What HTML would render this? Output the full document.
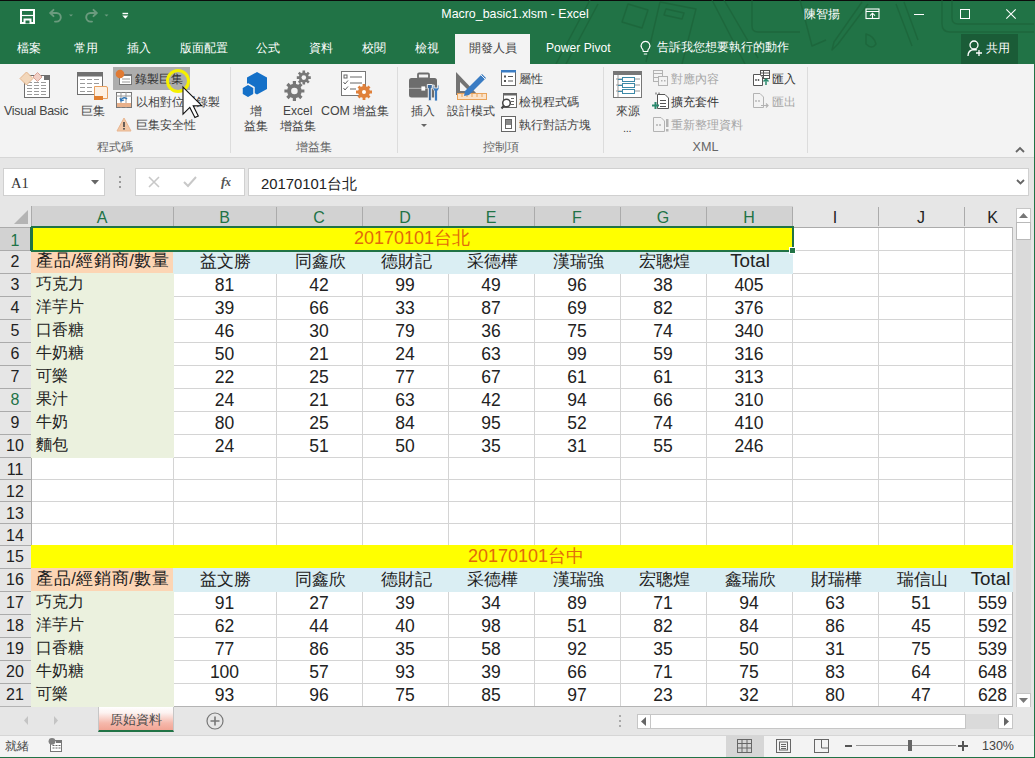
<!DOCTYPE html><html><head><meta charset="utf-8"><style>
html,body{margin:0;padding:0;}
body{width:1035px;height:758px;position:relative;overflow:hidden;background:#e6e6e6;font-family:"Liberation Sans",sans-serif;}
div{box-sizing:border-box;}
.t{position:absolute;white-space:nowrap;}
.c{text-align:center;}
svg{position:absolute;overflow:visible;}
</style></head><body>
<div style="position:absolute;left:0px;top:0px;width:1035px;height:64px;background:#217346;"></div>
<div style="position:absolute;left:0px;top:0px;width:1035px;height:1px;background:#0b0b0b;"></div>
<svg style="left:0;top:0" width="1035" height="64" viewBox="0 0 1035 64"><g fill="none" stroke="#1c6339" stroke-width="1.4" opacity="0.7" stroke-linejoin="round">
<path d="M556 64 L590 0"/><path d="M566 64 L598 4"/>
<path d="M628 4 L648 10 L642 28 L622 22Z"/>
<path d="M660 2 L696 9 L682 64 M660 2 L646 62"/><path d="M666 9 L684 13 L682 19 L664 15Z"/>
<path d="M712 0 L745 64"/><path d="M724 0 L758 58"/>
<path d="M752 0 V26 Q752 32 758 32 H800"/>
<path d="M800 0 L812 46 L826 40"/>
<path d="M868 4 L838 44 L832 50 L834 42 L862 2"/><path d="M866 34 Q874 36 876 44 Q872 50 866 44Z"/>
<path d="M896 4 L912 46 M904 2 L918 40"/>
<path d="M942 0 V24 Q942 32 950 32 H1034"/><path d="M952 0 V18 Q952 24 958 24 H1034"/>
</g></svg>
<svg style="left:19px;top:8px" width="17" height="17" viewBox="0 0 17 17"><rect x="2" y="2" width="13" height="13" fill="none" stroke="#fff" stroke-width="2"/><path d="M3 7.5 H14" stroke="#fff" stroke-width="1.2"/><rect x="4.5" y="10.5" width="8" height="5" fill="#fff"/><rect x="6.5" y="12.5" width="4" height="3" fill="#217346"/></svg>
<svg style="left:40px;top:2px" width="95" height="28" viewBox="40 2 95 28"><g fill="none" stroke="#6b9b7e" stroke-width="1.9" stroke-linecap="round" stroke-linejoin="round">
<path d="M50.5 13 H56.5 A4.3 4.3 0 0 1 56.5 21.6 H55"/><path d="M53.5 9.8 L50.3 13 L53.5 16.2"/>
<path d="M96.5 13 H90.5 A4.3 4.3 0 0 0 90.5 21.6 H92"/><path d="M93.5 9.8 L96.7 13 L93.5 16.2"/></g>
<g fill="#6b9b7e"><path d="M69 14.5h4l-2 2z"/><path d="M104.5 14.5h4l-2 2z"/></g>
<g fill="#fff"><rect x="122.5" y="12.8" width="5.6" height="1.4"/><path d="M122.3 15.5h6l-3 3.3z"/></g></svg>
<div class="t" style="left:375px;top:4px;width:280px;height:20px;line-height:20px;font-size:12.4px;color:#fff;text-align:center;">Macro_basic1.xlsm - Excel</div>
<div class="t" style="left:804px;top:4px;width:40px;height:20px;line-height:20px;font-size:12px;color:#fff;">陳智揚</div>
<svg style="left:865px;top:8px" width="15" height="11" viewBox="0 0 15 11"><rect x="1" y="1" width="13" height="9.5" fill="none" stroke="#fff" stroke-width="1.1"/><path d="M1 3.5H14" stroke="#fff" stroke-width="1"/><path d="M7.5 10.5V5.2M5 7.6L7.5 5.2L10 7.6" fill="none" stroke="#fff" stroke-width="1.1"/></svg>
<div style="position:absolute;left:914px;top:14px;width:10px;height:1px;background:#fff;"></div>
<div style="position:absolute;left:960px;top:9px;width:10px;height:10px;border:1px solid #fff;"></div>
<svg style="left:1006px;top:9px" width="10" height="10" viewBox="0 0 10 10"><path d="M0.3 0.3L9.7 9.7M9.7 0.3L0.3 9.7" stroke="#fff" stroke-width="1.1"/></svg>
<div class="t" style="left:17px;top:39px;width:60px;height:18px;line-height:18px;font-size:11.6px;color:#fff;">檔案</div>
<div class="t" style="left:74px;top:39px;width:60px;height:18px;line-height:18px;font-size:11.6px;color:#fff;">常用</div>
<div class="t" style="left:127px;top:39px;width:60px;height:18px;line-height:18px;font-size:11.6px;color:#fff;">插入</div>
<div class="t" style="left:180px;top:39px;width:60px;height:18px;line-height:18px;font-size:11.6px;color:#fff;">版面配置</div>
<div class="t" style="left:256px;top:39px;width:60px;height:18px;line-height:18px;font-size:11.6px;color:#fff;">公式</div>
<div class="t" style="left:309px;top:39px;width:60px;height:18px;line-height:18px;font-size:11.6px;color:#fff;">資料</div>
<div class="t" style="left:362px;top:39px;width:60px;height:18px;line-height:18px;font-size:11.6px;color:#fff;">校閱</div>
<div class="t" style="left:415px;top:39px;width:60px;height:18px;line-height:18px;font-size:11.6px;color:#fff;">檢視</div>
<div style="position:absolute;left:455px;top:34px;width:75px;height:30px;background:#f3f3f3;"></div>
<div class="t" style="left:469px;top:39px;width:60px;height:18px;line-height:18px;font-size:11.6px;color:#444;">開發人員</div>
<div class="t" style="left:546px;top:39px;width:80px;height:18px;line-height:18px;font-size:12.1px;color:#fff;">Power Pivot</div>
<svg style="left:640px;top:41px" width="11" height="15" viewBox="0 0 11 15"><path d="M3.3 10.5 Q3.3 8.5 1.6 6.8 A4.4 4.4 0 1 1 9.4 6.8 Q7.7 8.5 7.7 10.5Z M3.8 13H7.2" fill="none" stroke="#fff" stroke-width="1.2"/></svg>
<div class="t" style="left:657px;top:38px;width:140px;height:18px;line-height:18px;font-size:12.4px;color:#fff;">告訴我您想要執行的動作</div>
<div style="position:absolute;left:961px;top:34px;width:57px;height:30px;background:#1a5c37;"></div>
<svg style="left:967px;top:40px" width="16" height="17" viewBox="0 0 16 17"><circle cx="7" cy="5" r="4" fill="none" stroke="#fff" stroke-width="1.3"/><path d="M1 16 Q1 10 7 9.5 Q9 9.5 10 10" fill="none" stroke="#fff" stroke-width="1.3"/><path d="M12 10V16M9 13H15" stroke="#fff" stroke-width="1.3"/></svg>
<div class="t" style="left:986px;top:39px;width:30px;height:18px;line-height:18px;font-size:11.6px;color:#fff;">共用</div>
<div style="position:absolute;left:0px;top:64px;width:1035px;height:94px;background:#f3f3f3;border-bottom:1px solid #d6d6d6;"></div>
<div style="position:absolute;left:230px;top:67px;width:1px;height:86px;background:#dcdcdc;"></div>
<div style="position:absolute;left:397px;top:67px;width:1px;height:86px;background:#dcdcdc;"></div>
<div style="position:absolute;left:603px;top:67px;width:1px;height:86px;background:#dcdcdc;"></div>
<div style="position:absolute;left:807px;top:67px;width:1px;height:86px;background:#dcdcdc;"></div>
<svg style="left:14px;top:66px" width="40" height="36" viewBox="0 0 40 36">
<rect x="10.5" y="9.5" width="25" height="22" fill="#fff" stroke="#6f6f6f"/><rect x="30" y="9" width="6" height="5" fill="#6f6f6f"/>
<g stroke="#9a9a9a" stroke-width="1" stroke-dasharray="5 2"><path d="M13 16.5h20M13 19.5h20M13 22.5h20M13 25.5h20M13 28.5h20"/></g>
<path d="M12.5 6 L19 12.5 L12.5 19 L6 12.5Z" fill="#f2d7bb" stroke="#e3b58c"/><path d="M23.5 6.5 L28 11 L23.5 15.5 L19 11Z" fill="#f1cfc5" stroke="#d9a497"/></svg>
<div class="t" style="left:4px;top:102px;width:70px;height:18px;line-height:18px;color:#444;font-size:11.6px;font-size:12.4px;letter-spacing:-0.25px;">Visual Basic</div>
<svg style="left:76px;top:71px" width="34" height="30" viewBox="0 0 34 30">
<rect x="1.5" y="1.5" width="25" height="22" fill="#fff" stroke="#6f6f6f"/><rect x="1" y="1" width="26" height="4.5" fill="#6f6f6f"/>
<g stroke="#9a9a9a" stroke-dasharray="5 2"><path d="M4 8.5h20M4 12.5h20M4 16.5h20M4 20.5h16"/></g>
<path d="M18.5 15.5 H30 Q31.5 15.5 31.5 17 V27.5 H18.5Z" fill="#fdf1e4" stroke="#e8a060"/><rect x="18" y="25" width="9" height="4" fill="#e07f2f"/></svg>
<div class="t" style="left:81px;top:102px;width:30px;height:18px;line-height:18px;color:#444;font-size:11.6px;">巨集</div>
<div style="position:absolute;left:113px;top:67px;width:77px;height:23px;background:#adadad;"></div>
<svg style="left:115px;top:69px" width="18" height="18" viewBox="0 0 18 18">
<rect x="4.5" y="5.5" width="12" height="10" fill="#fff" stroke="#777"/><rect x="4" y="5" width="13" height="2" fill="#777"/>
<g stroke="#999"><path d="M7 10h8M7 13h8"/></g><circle cx="5" cy="5" r="4.3" fill="#e07a33"/></svg>
<div class="t" style="left:135px;top:70px;width:60px;height:18px;line-height:18px;color:#444;font-size:11.6px;color:#333;">錄製巨集</div>
<svg style="left:116px;top:92px" width="17" height="17" viewBox="0 0 17 17">
<rect x="0.5" y="0.5" width="15" height="15" fill="#fff" stroke="#777"/><path d="M0 4h16M5 0v16M10 0v16" stroke="#999"/>
<rect x="1" y="11" width="14" height="4" fill="#e8b08a"/><path d="M5 8 Q8 4 11 7" fill="none" stroke="#2e75b6" stroke-width="1.5"/><path d="M4 6 L5 9 L8 8" fill="none" stroke="#2e75b6" stroke-width="1.3"/></svg>
<div class="t" style="left:136px;top:93px;width:90px;height:18px;line-height:18px;color:#444;font-size:11.6px;">以相對位置錄製</div>
<svg style="left:116px;top:117px" width="16" height="15" viewBox="0 0 16 15">
<path d="M8 1 L15 14 H1Z" fill="#f2c7a6" stroke="#e9b690"/><rect x="7.2" y="5" width="1.6" height="5" fill="#444"/><rect x="7.2" y="11" width="1.6" height="1.6" fill="#444"/></svg>
<div class="t" style="left:136px;top:116px;width:70px;height:18px;line-height:18px;color:#444;font-size:11.6px;">巨集安全性</div>
<div class="t" style="left:80px;top:138px;width:70px;height:18px;line-height:18px;color:#666;font-size:12.4px;text-align:center;">程式碼</div>
<svg style="left:160px;top:64px" width="50" height="60" viewBox="0 0 50 60">
<circle cx="18" cy="17" r="10.5" fill="none" stroke="#f5f000" stroke-width="3"/>
<path d="M23.0 23.0 L23.0 50.2 L29.8 43.4 L34.9 53.6 L38.3 51.9 L33.2 41.7 L41.7 41.7Z" fill="#fff" stroke="#111" stroke-width="1.1" stroke-linejoin="miter"/></svg>
<svg style="left:240px;top:71px" width="30" height="30" viewBox="0 0 30 30">
<path d="M17 1 L27 6.5 V18 L17 23.5 L7 18 V6.5Z" fill="#1470c8"/>
<path d="M8 13 L14 16.5 V23.5 L8 27 L2 23.5 V16.5Z" fill="#1470c8" stroke="#f3f3f3" stroke-width="1.5"/></svg>
<div class="t" style="left:250px;top:102px;width:30px;height:18px;line-height:18px;color:#444;font-size:11.6px;">增</div>
<div class="t" style="left:244px;top:117px;width:30px;height:18px;line-height:18px;color:#444;font-size:11.6px;">益集</div>
<svg style="left:283px;top:69px" width="32" height="34" viewBox="0 0 32 34">
<g transform="translate(11.4 22)"><circle r="7.3" fill="#777"/><g stroke="#777" stroke-width="3.2"><path d="M0 -10V10M-10 0H10M-7 -7L7 7M7 -7L-7 7"/></g><circle r="3.3" fill="#f3f3f3"/></g>
<g transform="translate(20.8 8.6)"><circle r="5" fill="#777"/><g stroke="#777" stroke-width="2.6"><path d="M0 -7V7M-7 0H7M-5 -5L5 5M5 -5L-5 5"/></g><circle r="2.3" fill="#f3f3f3"/></g></svg>
<div class="t" style="left:283px;top:102px;width:40px;height:18px;line-height:18px;color:#444;font-size:11.6px;font-size:12px;">Excel</div>
<div class="t" style="left:280px;top:117px;width:40px;height:18px;line-height:18px;color:#444;font-size:11.6px;">增益集</div>
<svg style="left:340px;top:70px" width="34" height="32" viewBox="0 0 34 32">
<rect x="1.5" y="1.5" width="24" height="24" fill="#fff" stroke="#777"/>
<g stroke="#666"><path d="M10 7h12M10 13h12M10 19h6"/></g><rect x="4" y="5" width="3" height="3" fill="none" stroke="#666"/>
<path d="M3.5 12 L5 14 L8 10.5M3.5 18 L5 20 L8 16.5" fill="none" stroke="#666"/>
<g fill="#e0803a"><circle cx="24" cy="22" r="6"/></g><g stroke="#e0803a" stroke-width="2.8"><path d="M24 14v16M16 22h16M18.5 16.5l11 11M29.5 16.5l-11 11"/></g><circle cx="24" cy="22" r="2" fill="#fff"/></svg>
<div class="t" style="left:321px;top:102px;width:75px;height:18px;line-height:18px;color:#444;font-size:11.6px;font-size:12.4px;">COM 增益集</div>
<div class="t" style="left:231px;top:138px;width:166px;height:18px;line-height:18px;color:#666;font-size:12.4px;text-align:center;">增益集</div>
<svg style="left:407px;top:71px" width="34" height="32" viewBox="0 0 34 32">
<rect x="11" y="2.5" width="11" height="5" rx="1" fill="none" stroke="#6d6d6d" stroke-width="1.8"/>
<rect x="2" y="7" width="28" height="19.5" rx="2.5" fill="#6d6d6d"/><rect x="2" y="16.8" width="28" height="1.2" fill="#a8a8a8"/><rect x="14.4" y="15.4" width="3.8" height="4.2" fill="#fff"/>
<path d="M20.3 13.5 h5 v3 l-1 0.8 v12.5 h-3 v-12.5 l-1 -0.8z" fill="#3c6a9c" stroke="#f3f3f3" stroke-width="1"/>
<path d="M26 14 v3.5 a2.8 2.8 0 0 0 1.5 2.3 v10.2 h3 v-10.2 a2.8 2.8 0 0 0 1.5 -2.3 v-3.5 l-1.3 0 v3 h-3.4 v-3z" fill="#3c7cc0" stroke="#f3f3f3" stroke-width="0.8"/></svg>
<div class="t" style="left:411px;top:102px;width:30px;height:18px;line-height:18px;color:#444;font-size:11.6px;">插入</div>
<svg style="left:421px;top:124px" width="6" height="4" viewBox="0 0 6 4"><path d="M0 0h6L3 3z" fill="#666"/></svg>
<svg style="left:454px;top:70px" width="34" height="32" viewBox="0 0 34 32">
<path d="M2 2 L2 25 L24 25Z" fill="#737373"/><path d="M6 12 L6 21 L15 21Z" fill="#f3f3f3"/>
<rect x="3.5" y="23.5" width="29" height="6" fill="#fbe3c9" stroke="#e9a35a"/><g stroke="#e9a35a"><path d="M8 24v3M13 24v3M18 24v3M23 24v3M28 24v3"/></g>
<path d="M11 21 L28 4 L32 8 L15 25 L10 26Z" fill="#3a7cc3"/><path d="M27 5 L31 9" stroke="#f3f3f3"/></svg>
<div class="t" style="left:447px;top:102px;width:50px;height:18px;line-height:18px;color:#444;font-size:11.6px;">設計模式</div>
<svg style="left:501px;top:70px" width="15" height="16" viewBox="0 0 15 16"><rect x="0.5" y="0.5" width="14" height="15" fill="#fff" stroke="#666"/><rect x="0" y="0" width="15" height="2.5" fill="#3a7cc3"/><g fill="#555"><rect x="3" y="5.5" width="2" height="2"/><rect x="3" y="10" width="2" height="2"/><rect x="7" y="6" width="5" height="1"/><rect x="7" y="10.5" width="5" height="1"/></g></svg>
<div class="t" style="left:519px;top:70px;width:40px;height:18px;line-height:18px;color:#444;font-size:11.6px;">屬性</div>
<svg style="left:501px;top:93px" width="16" height="17" viewBox="0 0 16 17"><rect x="2.5" y="0.5" width="13" height="14" fill="#fff" stroke="#666"/><rect x="2" y="0" width="14" height="2.5" fill="#666"/><g fill="#666"><rect x="10" y="5" width="3" height="1"/><rect x="10" y="8" width="3" height="1"/><rect x="10" y="11" width="3" height="1"/></g><circle cx="5.5" cy="10" r="3.8" fill="#fff" stroke="#444" stroke-width="1.5"/><path d="M3 12.5 L0.5 15.5" stroke="#444" stroke-width="2"/></svg>
<div class="t" style="left:519px;top:93px;width:70px;height:18px;line-height:18px;color:#444;font-size:11.6px;">檢視程式碼</div>
<svg style="left:501px;top:116px" width="15" height="16" viewBox="0 0 15 16"><rect x="0.5" y="0.5" width="14" height="15" fill="#fff" stroke="#666"/><rect x="4.5" y="3.5" width="6" height="9" fill="#fff" stroke="#666"/><rect x="5" y="4" width="5" height="5" fill="#888"/></svg>
<div class="t" style="left:519px;top:116px;width:80px;height:18px;line-height:18px;color:#444;font-size:11.6px;">執行對話方塊</div>
<div class="t" style="left:398px;top:138px;width:205px;height:18px;line-height:18px;color:#666;font-size:12.4px;text-align:center;">控制項</div>
<svg style="left:613px;top:71px" width="30" height="30" viewBox="0 0 30 30">
<rect x="0.5" y="0.5" width="28" height="26" fill="#fff" stroke="#777"/><rect x="0" y="0" width="29" height="4" fill="#777"/>
<g stroke="#999"><path d="M3 8h24M3 14h24M3 20h24M5 4v22"/></g>
<g fill="#fff" stroke="#3d8aa8"><rect x="9.5" y="6.5" width="12" height="4"/><rect x="9.5" y="12.5" width="12" height="4"/><rect x="9.5" y="18.5" width="12" height="4"/></g>
<path d="M5 8.5h4.5M5 14.5h4.5M5 20.5h4.5" stroke="#3d8aa8"/></svg>
<div class="t" style="left:616px;top:102px;width:30px;height:18px;line-height:18px;color:#444;font-size:11.6px;">來源</div>
<div class="t" style="left:623px;top:119px;width:30px;height:18px;line-height:18px;color:#444;font-size:11.6px;font-size:11px;letter-spacing:-0.3px;">...</div>
<svg style="left:653px;top:70px" width="16" height="16" viewBox="0 0 16 16"><g fill="none" stroke="#b3b3b3"><rect x="0.5" y="0.5" width="9" height="11"/><path d="M0.5 3.5h9M0.5 7.5h9"/><rect x="5.5" y="6.5" width="9" height="9" fill="#f3f3f3"/></g><g fill="#b3b3b3"><rect x="8" y="10" width="1.5" height="1.5"/><rect x="11" y="10" width="1.5" height="1.5"/></g></svg>
<div class="t" style="left:671px;top:70px;width:60px;height:18px;line-height:18px;color:#a6a6a6;font-size:11.6px;">對應內容</div>
<svg style="left:652px;top:92px" width="18" height="18" viewBox="0 0 18 18"><path d="M5.5 2.5 H13 L16.5 6 V16.5 H5.5Z" fill="#fff" stroke="#555"/><g fill="#555"><rect x="8" y="8" width="6" height="1"/><rect x="8" y="11" width="6" height="1"/><rect x="8" y="14" width="6" height="1"/></g><path d="M4 0.5 v2M7 0.5 v2" stroke="#555"/><path d="M3.5 10v7M0 13.5h7" stroke="#2a8a6e" stroke-width="2"/></svg>
<div class="t" style="left:671px;top:93px;width:60px;height:18px;line-height:18px;color:#444;font-size:11.6px;color:#333;">擴充套件</div>
<svg style="left:653px;top:116px" width="17" height="17" viewBox="0 0 17 17"><path d="M0.5 1.5 H8 L11.5 5 V15.5 H0.5Z" fill="none" stroke="#b3b3b3"/><g fill="#b3b3b3"><circle cx="4" cy="9" r="1"/><circle cx="7" cy="9" r="1"/><rect x="13" y="3" width="2.5" height="8"/><rect x="13" y="13" width="2.5" height="2.5"/></g></svg>
<div class="t" style="left:671px;top:116px;width:80px;height:18px;line-height:18px;color:#a6a6a6;font-size:11.6px;">重新整理資料</div>
<svg style="left:753px;top:70px" width="17" height="16" viewBox="0 0 17 16"><rect x="7.5" y="0.5" width="9" height="8" fill="#fff" stroke="#555"/><path d="M7.5 3h9M7.5 5.5h9M10.5 0.5v8" stroke="#555"/><path d="M0.5 4.5 H7 L9.5 7 V15.5 H0.5Z" fill="#fff" stroke="#555"/><g fill="#555"><circle cx="3" cy="10" r="0.9"/><circle cx="5.5" cy="10" r="0.9"/></g><path d="M13 15V9M10.5 11.5L13 9L15.5 11.5" fill="none" stroke="#2a8a6e" stroke-width="1.5"/></svg>
<div class="t" style="left:772px;top:70px;width:30px;height:18px;line-height:18px;color:#444;font-size:11.6px;color:#333;">匯入</div>
<svg style="left:753px;top:93px" width="17" height="16" viewBox="0 0 17 16"><path d="M0.5 0.5 H7 L10.5 4 V14.5 H0.5Z" fill="none" stroke="#b3b3b3"/><g fill="#b3b3b3"><circle cx="3" cy="8" r="0.9"/><circle cx="6" cy="8" r="0.9"/></g><path d="M8 12.5H15M13 10.5L15 12.5L13 14.5" fill="none" stroke="#b3b3b3" stroke-width="1.2"/></svg>
<div class="t" style="left:772px;top:93px;width:30px;height:18px;line-height:18px;color:#a6a6a6;font-size:11.6px;">匯出</div>
<div class="t" style="left:604px;top:138px;width:203px;height:18px;line-height:18px;color:#666;font-size:12.4px;text-align:center;font-size:12.6px;">XML</div>
<svg style="left:1015px;top:146px" width="10" height="7" viewBox="0 0 10 7"><path d="M1 6 L5 2 L9 6" fill="none" stroke="#666" stroke-width="1.8"/></svg>
<div style="position:absolute;left:3px;top:168px;width:102px;height:28px;background:#fff;border:1px solid #d0d0d0;"></div>
<div class="t" style="left:11px;top:174px;width:40px;height:18px;line-height:18px;font-family:&quot;Liberation Serif&quot;,serif;font-size:14.5px;color:#333;">A1</div>
<svg style="left:91px;top:180px" width="8" height="5" viewBox="0 0 8 5"><path d="M0 0h8L4 4.5z" fill="#666"/></svg>
<div style="position:absolute;left:119px;top:176px;width:2px;height:2px;background:#9a9a9a;"></div>
<div style="position:absolute;left:119px;top:181px;width:2px;height:2px;background:#9a9a9a;"></div>
<div style="position:absolute;left:119px;top:186px;width:2px;height:2px;background:#9a9a9a;"></div>
<div style="position:absolute;left:135px;top:168px;width:110px;height:28px;background:#fff;border:1px solid #d0d0d0;"></div>
<svg style="left:148px;top:176px" width="12" height="12" viewBox="0 0 12 12"><path d="M1 1L11 11M11 1L1 11" stroke="#c8c8c8" stroke-width="1.6"/></svg>
<svg style="left:183px;top:176px" width="14" height="12" viewBox="0 0 14 12"><path d="M1 6L5 10L13 1" fill="none" stroke="#c8c8c8" stroke-width="2"/></svg>
<div class="t" style="left:221px;top:173px;width:20px;height:18px;line-height:18px;font-family:&quot;Liberation Serif&quot;,serif;font-size:13.5px;color:#555;font-weight:bold;letter-spacing:-0.5px;"><i>f</i><span style="font-size:12px"><i>x</i></span></div>
<div style="position:absolute;left:248px;top:168px;width:781px;height:28px;background:#fff;border:1px solid #d0d0d0;"></div>
<div class="t" style="left:261px;top:175px;width:200px;height:18px;line-height:18px;font-size:14.85px;color:#222;">20170101台北</div>
<svg style="left:1016px;top:179px" width="9" height="6" viewBox="0 0 9 6"><path d="M1 1L4.5 4.5L8 1" fill="none" stroke="#666" stroke-width="1.8"/></svg>
<div style="position:absolute;left:0px;top:206px;width:1013px;height:21px;background:#e6e6e6;"></div>
<div style="position:absolute;left:31px;top:206px;width:762px;height:20px;background:#d2d2d2;"></div>
<svg style="left:14px;top:210px" width="14" height="14" viewBox="0 0 14 14"><path d="M14 0V14H0Z" fill="#b4b4b4"/></svg>
<div style="position:absolute;left:0px;top:227px;width:31px;height:480px;background:#e6e6e6;"></div>
<div style="position:absolute;left:0px;top:227px;width:31px;height:23px;background:#d2d2d2;"></div>
<div style="position:absolute;left:32px;top:227px;width:981px;height:480px;background:#fff;"></div>
<div style="position:absolute;left:32px;top:250px;width:981px;height:1px;background:#d4d4d4;"></div>
<div style="position:absolute;left:0px;top:250px;width:31px;height:1px;background:#ababab;"></div>
<div style="position:absolute;left:32px;top:273px;width:981px;height:1px;background:#d4d4d4;"></div>
<div style="position:absolute;left:0px;top:273px;width:31px;height:1px;background:#ababab;"></div>
<div style="position:absolute;left:32px;top:296px;width:981px;height:1px;background:#d4d4d4;"></div>
<div style="position:absolute;left:0px;top:296px;width:31px;height:1px;background:#ababab;"></div>
<div style="position:absolute;left:32px;top:319px;width:981px;height:1px;background:#d4d4d4;"></div>
<div style="position:absolute;left:0px;top:319px;width:31px;height:1px;background:#ababab;"></div>
<div style="position:absolute;left:32px;top:342px;width:981px;height:1px;background:#d4d4d4;"></div>
<div style="position:absolute;left:0px;top:342px;width:31px;height:1px;background:#ababab;"></div>
<div style="position:absolute;left:32px;top:365px;width:981px;height:1px;background:#d4d4d4;"></div>
<div style="position:absolute;left:0px;top:365px;width:31px;height:1px;background:#ababab;"></div>
<div style="position:absolute;left:32px;top:388px;width:981px;height:1px;background:#d4d4d4;"></div>
<div style="position:absolute;left:0px;top:388px;width:31px;height:1px;background:#ababab;"></div>
<div style="position:absolute;left:32px;top:411px;width:981px;height:1px;background:#d4d4d4;"></div>
<div style="position:absolute;left:0px;top:411px;width:31px;height:1px;background:#ababab;"></div>
<div style="position:absolute;left:32px;top:434px;width:981px;height:1px;background:#d4d4d4;"></div>
<div style="position:absolute;left:0px;top:434px;width:31px;height:1px;background:#ababab;"></div>
<div style="position:absolute;left:32px;top:457px;width:981px;height:1px;background:#d4d4d4;"></div>
<div style="position:absolute;left:0px;top:457px;width:31px;height:1px;background:#ababab;"></div>
<div style="position:absolute;left:32px;top:479px;width:981px;height:1px;background:#d4d4d4;"></div>
<div style="position:absolute;left:0px;top:479px;width:31px;height:1px;background:#ababab;"></div>
<div style="position:absolute;left:32px;top:501px;width:981px;height:1px;background:#d4d4d4;"></div>
<div style="position:absolute;left:0px;top:501px;width:31px;height:1px;background:#ababab;"></div>
<div style="position:absolute;left:32px;top:523px;width:981px;height:1px;background:#d4d4d4;"></div>
<div style="position:absolute;left:0px;top:523px;width:31px;height:1px;background:#ababab;"></div>
<div style="position:absolute;left:32px;top:545px;width:981px;height:1px;background:#d4d4d4;"></div>
<div style="position:absolute;left:0px;top:545px;width:31px;height:1px;background:#ababab;"></div>
<div style="position:absolute;left:32px;top:568px;width:981px;height:1px;background:#d4d4d4;"></div>
<div style="position:absolute;left:0px;top:568px;width:31px;height:1px;background:#ababab;"></div>
<div style="position:absolute;left:32px;top:591px;width:981px;height:1px;background:#d4d4d4;"></div>
<div style="position:absolute;left:0px;top:591px;width:31px;height:1px;background:#ababab;"></div>
<div style="position:absolute;left:32px;top:614px;width:981px;height:1px;background:#d4d4d4;"></div>
<div style="position:absolute;left:0px;top:614px;width:31px;height:1px;background:#ababab;"></div>
<div style="position:absolute;left:32px;top:637px;width:981px;height:1px;background:#d4d4d4;"></div>
<div style="position:absolute;left:0px;top:637px;width:31px;height:1px;background:#ababab;"></div>
<div style="position:absolute;left:32px;top:660px;width:981px;height:1px;background:#d4d4d4;"></div>
<div style="position:absolute;left:0px;top:660px;width:31px;height:1px;background:#ababab;"></div>
<div style="position:absolute;left:32px;top:683px;width:981px;height:1px;background:#d4d4d4;"></div>
<div style="position:absolute;left:0px;top:683px;width:31px;height:1px;background:#ababab;"></div>
<div style="position:absolute;left:32px;top:706px;width:981px;height:1px;background:#d4d4d4;"></div>
<div style="position:absolute;left:0px;top:706px;width:31px;height:1px;background:#ababab;"></div>
<div style="position:absolute;left:173px;top:227px;width:1px;height:479px;background:#d4d4d4;"></div>
<div style="position:absolute;left:173px;top:207px;width:1px;height:19px;background:#ababab;"></div>
<div style="position:absolute;left:276px;top:227px;width:1px;height:479px;background:#d4d4d4;"></div>
<div style="position:absolute;left:276px;top:207px;width:1px;height:19px;background:#ababab;"></div>
<div style="position:absolute;left:362px;top:227px;width:1px;height:479px;background:#d4d4d4;"></div>
<div style="position:absolute;left:362px;top:207px;width:1px;height:19px;background:#ababab;"></div>
<div style="position:absolute;left:448px;top:227px;width:1px;height:479px;background:#d4d4d4;"></div>
<div style="position:absolute;left:448px;top:207px;width:1px;height:19px;background:#ababab;"></div>
<div style="position:absolute;left:534px;top:227px;width:1px;height:479px;background:#d4d4d4;"></div>
<div style="position:absolute;left:534px;top:207px;width:1px;height:19px;background:#ababab;"></div>
<div style="position:absolute;left:620px;top:227px;width:1px;height:479px;background:#d4d4d4;"></div>
<div style="position:absolute;left:620px;top:207px;width:1px;height:19px;background:#ababab;"></div>
<div style="position:absolute;left:706px;top:227px;width:1px;height:479px;background:#d4d4d4;"></div>
<div style="position:absolute;left:706px;top:207px;width:1px;height:19px;background:#ababab;"></div>
<div style="position:absolute;left:792px;top:227px;width:1px;height:479px;background:#d4d4d4;"></div>
<div style="position:absolute;left:792px;top:207px;width:1px;height:19px;background:#ababab;"></div>
<div style="position:absolute;left:878px;top:227px;width:1px;height:479px;background:#d4d4d4;"></div>
<div style="position:absolute;left:878px;top:207px;width:1px;height:19px;background:#ababab;"></div>
<div style="position:absolute;left:964px;top:227px;width:1px;height:479px;background:#d4d4d4;"></div>
<div style="position:absolute;left:964px;top:207px;width:1px;height:19px;background:#ababab;"></div>
<div style="position:absolute;left:0px;top:227px;width:1013px;height:1px;background:#ababab;"></div>
<div style="position:absolute;left:31px;top:226px;width:762px;height:1px;background:#217346;"></div>
<div style="position:absolute;left:31px;top:206px;width:1px;height:500px;background:#ababab;"></div>
<div style="position:absolute;left:30px;top:227px;width:1px;height:24px;background:#217346;"></div>
<div style="position:absolute;left:1012px;top:227px;width:1px;height:480px;background:#b8b8b8;"></div>
<div style="position:absolute;left:0px;top:706px;width:1013px;height:1px;background:#b4b4b4;"></div>
<div style="position:absolute;left:31px;top:226px;width:762px;height:25px;background:#ffff00;"></div>
<div style="position:absolute;left:31px;top:250px;width:143px;height:24px;background:#fcd5b4;"></div>
<div style="position:absolute;left:173px;top:250px;width:620px;height:24px;background:#daeef3;"></div>
<div style="position:absolute;left:31px;top:273px;width:143px;height:24px;background:#ebf1de;"></div>
<div style="position:absolute;left:31px;top:296px;width:143px;height:24px;background:#ebf1de;"></div>
<div style="position:absolute;left:31px;top:319px;width:143px;height:24px;background:#ebf1de;"></div>
<div style="position:absolute;left:31px;top:342px;width:143px;height:24px;background:#ebf1de;"></div>
<div style="position:absolute;left:31px;top:365px;width:143px;height:24px;background:#ebf1de;"></div>
<div style="position:absolute;left:31px;top:388px;width:143px;height:24px;background:#ebf1de;"></div>
<div style="position:absolute;left:31px;top:411px;width:143px;height:24px;background:#ebf1de;"></div>
<div style="position:absolute;left:31px;top:434px;width:143px;height:24px;background:#ebf1de;"></div>
<div style="position:absolute;left:31px;top:545px;width:982px;height:24px;background:#ffff00;"></div>
<div style="position:absolute;left:31px;top:568px;width:143px;height:24px;background:#fcd5b4;"></div>
<div style="position:absolute;left:173px;top:568px;width:840px;height:24px;background:#daeef3;"></div>
<div style="position:absolute;left:31px;top:591px;width:143px;height:24px;background:#ebf1de;"></div>
<div style="position:absolute;left:31px;top:614px;width:143px;height:24px;background:#ebf1de;"></div>
<div style="position:absolute;left:31px;top:637px;width:143px;height:24px;background:#ebf1de;"></div>
<div style="position:absolute;left:31px;top:660px;width:143px;height:24px;background:#ebf1de;"></div>
<div style="position:absolute;left:31px;top:683px;width:143px;height:24px;background:#ebf1de;"></div>
<div class="t" style="left:31px;top:207px;width:142px;height:20px;line-height:20px;font-size:16px;color:#217346;text-align:center;padding-top:1px;">A</div>
<div class="t" style="left:173px;top:207px;width:103px;height:20px;line-height:20px;font-size:16px;color:#217346;text-align:center;padding-top:1px;">B</div>
<div class="t" style="left:276px;top:207px;width:86px;height:20px;line-height:20px;font-size:16px;color:#217346;text-align:center;padding-top:1px;">C</div>
<div class="t" style="left:362px;top:207px;width:86px;height:20px;line-height:20px;font-size:16px;color:#217346;text-align:center;padding-top:1px;">D</div>
<div class="t" style="left:448px;top:207px;width:86px;height:20px;line-height:20px;font-size:16px;color:#217346;text-align:center;padding-top:1px;">E</div>
<div class="t" style="left:534px;top:207px;width:86px;height:20px;line-height:20px;font-size:16px;color:#217346;text-align:center;padding-top:1px;">F</div>
<div class="t" style="left:620px;top:207px;width:86px;height:20px;line-height:20px;font-size:16px;color:#217346;text-align:center;padding-top:1px;">G</div>
<div class="t" style="left:706px;top:207px;width:86px;height:20px;line-height:20px;font-size:16px;color:#217346;text-align:center;padding-top:1px;">H</div>
<div class="t" style="left:792px;top:207px;width:86px;height:20px;line-height:20px;font-size:16px;color:#222;text-align:center;padding-top:1px;">I</div>
<div class="t" style="left:878px;top:207px;width:86px;height:20px;line-height:20px;font-size:16px;color:#222;text-align:center;padding-top:1px;">J</div>
<div class="t" style="left:964px;top:207px;width:57px;height:20px;line-height:20px;font-size:16px;color:#222;text-align:center;padding-top:1px;">K</div>
<div class="t" style="left:0px;top:229px;width:30px;height:24px;line-height:24px;font-size:16px;color:#217346;text-align:center;">1</div>
<div class="t" style="left:0px;top:250px;width:30px;height:23px;line-height:23px;font-size:16px;color:#222;text-align:center;">2</div>
<div class="t" style="left:0px;top:273px;width:30px;height:23px;line-height:23px;font-size:16px;color:#222;text-align:center;">3</div>
<div class="t" style="left:0px;top:296px;width:30px;height:23px;line-height:23px;font-size:16px;color:#222;text-align:center;">4</div>
<div class="t" style="left:0px;top:319px;width:30px;height:23px;line-height:23px;font-size:16px;color:#222;text-align:center;">5</div>
<div class="t" style="left:0px;top:342px;width:30px;height:23px;line-height:23px;font-size:16px;color:#222;text-align:center;">6</div>
<div class="t" style="left:0px;top:365px;width:30px;height:23px;line-height:23px;font-size:16px;color:#222;text-align:center;">7</div>
<div class="t" style="left:0px;top:388px;width:30px;height:23px;line-height:23px;font-size:16px;color:#217346;text-align:center;">8</div>
<div class="t" style="left:0px;top:411px;width:30px;height:23px;line-height:23px;font-size:16px;color:#222;text-align:center;">9</div>
<div class="t" style="left:0px;top:434px;width:30px;height:23px;line-height:23px;font-size:16px;color:#222;text-align:center;">10</div>
<div class="t" style="left:0px;top:459px;width:30px;height:22px;line-height:22px;font-size:16px;color:#222;text-align:center;">11</div>
<div class="t" style="left:0px;top:481px;width:30px;height:22px;line-height:22px;font-size:16px;color:#222;text-align:center;">12</div>
<div class="t" style="left:0px;top:503px;width:30px;height:22px;line-height:22px;font-size:16px;color:#222;text-align:center;">13</div>
<div class="t" style="left:0px;top:525px;width:30px;height:22px;line-height:22px;font-size:16px;color:#222;text-align:center;">14</div>
<div class="t" style="left:0px;top:545px;width:30px;height:23px;line-height:23px;font-size:16px;color:#222;text-align:center;">15</div>
<div class="t" style="left:0px;top:568px;width:30px;height:23px;line-height:23px;font-size:16px;color:#222;text-align:center;">16</div>
<div class="t" style="left:0px;top:591px;width:30px;height:23px;line-height:23px;font-size:16px;color:#222;text-align:center;">17</div>
<div class="t" style="left:0px;top:614px;width:30px;height:23px;line-height:23px;font-size:16px;color:#222;text-align:center;">18</div>
<div class="t" style="left:0px;top:637px;width:30px;height:23px;line-height:23px;font-size:16px;color:#222;text-align:center;">19</div>
<div class="t" style="left:0px;top:660px;width:30px;height:23px;line-height:23px;font-size:16px;color:#222;text-align:center;">20</div>
<div class="t" style="left:0px;top:683px;width:30px;height:23px;line-height:23px;font-size:16px;color:#222;text-align:center;">21</div>
<div class="t" style="left:31px;top:226px;width:762px;height:24px;line-height:24px;font-size:18px;color:#e26b0a;text-align:center;">20170101台北</div>
<div class="t" style="left:36px;top:248.5px;width:162px;height:23px;line-height:23px;font-size:17px;color:#222;font-size:16.6px;letter-spacing:0.6px;">產品/經銷商/數量</div>
<div class="t" style="left:174px;top:249.5px;width:103px;height:23px;line-height:23px;font-size:17px;color:#222;text-align:center;">益文勝</div>
<div class="t" style="left:277px;top:249.5px;width:86px;height:23px;line-height:23px;font-size:17px;color:#222;text-align:center;">同鑫欣</div>
<div class="t" style="left:363px;top:249.5px;width:86px;height:23px;line-height:23px;font-size:17px;color:#222;text-align:center;">德財記</div>
<div class="t" style="left:449px;top:249.5px;width:86px;height:23px;line-height:23px;font-size:17px;color:#222;text-align:center;">采德樺</div>
<div class="t" style="left:535px;top:249.5px;width:86px;height:23px;line-height:23px;font-size:17px;color:#222;text-align:center;">漢瑞強</div>
<div class="t" style="left:621px;top:249.5px;width:86px;height:23px;line-height:23px;font-size:17px;color:#222;text-align:center;">宏聰煌</div>
<div class="t" style="left:707px;top:249px;width:86px;height:23px;line-height:23px;font-size:17.5px;color:#222;font-size:18.8px;text-align:center;">Total</div>
<div class="t" style="left:36px;top:271.5px;width:162px;height:23px;line-height:23px;font-size:17px;color:#222;font-size:16px;">巧克力</div>
<div class="t" style="left:173px;top:274px;width:103px;height:23px;line-height:23px;font-size:17.5px;color:#222;text-align:center;">81</div>
<div class="t" style="left:276px;top:274px;width:86px;height:23px;line-height:23px;font-size:17.5px;color:#222;text-align:center;">42</div>
<div class="t" style="left:362px;top:274px;width:86px;height:23px;line-height:23px;font-size:17.5px;color:#222;text-align:center;">99</div>
<div class="t" style="left:448px;top:274px;width:86px;height:23px;line-height:23px;font-size:17.5px;color:#222;text-align:center;">49</div>
<div class="t" style="left:534px;top:274px;width:86px;height:23px;line-height:23px;font-size:17.5px;color:#222;text-align:center;">96</div>
<div class="t" style="left:620px;top:274px;width:86px;height:23px;line-height:23px;font-size:17.5px;color:#222;text-align:center;">38</div>
<div class="t" style="left:706px;top:274px;width:86px;height:23px;line-height:23px;font-size:17.5px;color:#222;text-align:center;">405</div>
<div class="t" style="left:36px;top:294.5px;width:162px;height:23px;line-height:23px;font-size:17px;color:#222;font-size:16px;">洋芋片</div>
<div class="t" style="left:173px;top:297px;width:103px;height:23px;line-height:23px;font-size:17.5px;color:#222;text-align:center;">39</div>
<div class="t" style="left:276px;top:297px;width:86px;height:23px;line-height:23px;font-size:17.5px;color:#222;text-align:center;">66</div>
<div class="t" style="left:362px;top:297px;width:86px;height:23px;line-height:23px;font-size:17.5px;color:#222;text-align:center;">33</div>
<div class="t" style="left:448px;top:297px;width:86px;height:23px;line-height:23px;font-size:17.5px;color:#222;text-align:center;">87</div>
<div class="t" style="left:534px;top:297px;width:86px;height:23px;line-height:23px;font-size:17.5px;color:#222;text-align:center;">69</div>
<div class="t" style="left:620px;top:297px;width:86px;height:23px;line-height:23px;font-size:17.5px;color:#222;text-align:center;">82</div>
<div class="t" style="left:706px;top:297px;width:86px;height:23px;line-height:23px;font-size:17.5px;color:#222;text-align:center;">376</div>
<div class="t" style="left:36px;top:317.5px;width:162px;height:23px;line-height:23px;font-size:17px;color:#222;font-size:16px;">口香糖</div>
<div class="t" style="left:173px;top:320px;width:103px;height:23px;line-height:23px;font-size:17.5px;color:#222;text-align:center;">46</div>
<div class="t" style="left:276px;top:320px;width:86px;height:23px;line-height:23px;font-size:17.5px;color:#222;text-align:center;">30</div>
<div class="t" style="left:362px;top:320px;width:86px;height:23px;line-height:23px;font-size:17.5px;color:#222;text-align:center;">79</div>
<div class="t" style="left:448px;top:320px;width:86px;height:23px;line-height:23px;font-size:17.5px;color:#222;text-align:center;">36</div>
<div class="t" style="left:534px;top:320px;width:86px;height:23px;line-height:23px;font-size:17.5px;color:#222;text-align:center;">75</div>
<div class="t" style="left:620px;top:320px;width:86px;height:23px;line-height:23px;font-size:17.5px;color:#222;text-align:center;">74</div>
<div class="t" style="left:706px;top:320px;width:86px;height:23px;line-height:23px;font-size:17.5px;color:#222;text-align:center;">340</div>
<div class="t" style="left:36px;top:340.5px;width:162px;height:23px;line-height:23px;font-size:17px;color:#222;font-size:16px;">牛奶糖</div>
<div class="t" style="left:173px;top:343px;width:103px;height:23px;line-height:23px;font-size:17.5px;color:#222;text-align:center;">50</div>
<div class="t" style="left:276px;top:343px;width:86px;height:23px;line-height:23px;font-size:17.5px;color:#222;text-align:center;">21</div>
<div class="t" style="left:362px;top:343px;width:86px;height:23px;line-height:23px;font-size:17.5px;color:#222;text-align:center;">24</div>
<div class="t" style="left:448px;top:343px;width:86px;height:23px;line-height:23px;font-size:17.5px;color:#222;text-align:center;">63</div>
<div class="t" style="left:534px;top:343px;width:86px;height:23px;line-height:23px;font-size:17.5px;color:#222;text-align:center;">99</div>
<div class="t" style="left:620px;top:343px;width:86px;height:23px;line-height:23px;font-size:17.5px;color:#222;text-align:center;">59</div>
<div class="t" style="left:706px;top:343px;width:86px;height:23px;line-height:23px;font-size:17.5px;color:#222;text-align:center;">316</div>
<div class="t" style="left:36px;top:363.5px;width:162px;height:23px;line-height:23px;font-size:17px;color:#222;font-size:16px;">可樂</div>
<div class="t" style="left:173px;top:366px;width:103px;height:23px;line-height:23px;font-size:17.5px;color:#222;text-align:center;">22</div>
<div class="t" style="left:276px;top:366px;width:86px;height:23px;line-height:23px;font-size:17.5px;color:#222;text-align:center;">25</div>
<div class="t" style="left:362px;top:366px;width:86px;height:23px;line-height:23px;font-size:17.5px;color:#222;text-align:center;">77</div>
<div class="t" style="left:448px;top:366px;width:86px;height:23px;line-height:23px;font-size:17.5px;color:#222;text-align:center;">67</div>
<div class="t" style="left:534px;top:366px;width:86px;height:23px;line-height:23px;font-size:17.5px;color:#222;text-align:center;">61</div>
<div class="t" style="left:620px;top:366px;width:86px;height:23px;line-height:23px;font-size:17.5px;color:#222;text-align:center;">61</div>
<div class="t" style="left:706px;top:366px;width:86px;height:23px;line-height:23px;font-size:17.5px;color:#222;text-align:center;">313</div>
<div class="t" style="left:36px;top:386.5px;width:162px;height:23px;line-height:23px;font-size:17px;color:#222;font-size:16px;">果汁</div>
<div class="t" style="left:173px;top:389px;width:103px;height:23px;line-height:23px;font-size:17.5px;color:#222;text-align:center;">24</div>
<div class="t" style="left:276px;top:389px;width:86px;height:23px;line-height:23px;font-size:17.5px;color:#222;text-align:center;">21</div>
<div class="t" style="left:362px;top:389px;width:86px;height:23px;line-height:23px;font-size:17.5px;color:#222;text-align:center;">63</div>
<div class="t" style="left:448px;top:389px;width:86px;height:23px;line-height:23px;font-size:17.5px;color:#222;text-align:center;">42</div>
<div class="t" style="left:534px;top:389px;width:86px;height:23px;line-height:23px;font-size:17.5px;color:#222;text-align:center;">94</div>
<div class="t" style="left:620px;top:389px;width:86px;height:23px;line-height:23px;font-size:17.5px;color:#222;text-align:center;">66</div>
<div class="t" style="left:706px;top:389px;width:86px;height:23px;line-height:23px;font-size:17.5px;color:#222;text-align:center;">310</div>
<div class="t" style="left:36px;top:409.5px;width:162px;height:23px;line-height:23px;font-size:17px;color:#222;font-size:16px;">牛奶</div>
<div class="t" style="left:173px;top:412px;width:103px;height:23px;line-height:23px;font-size:17.5px;color:#222;text-align:center;">80</div>
<div class="t" style="left:276px;top:412px;width:86px;height:23px;line-height:23px;font-size:17.5px;color:#222;text-align:center;">25</div>
<div class="t" style="left:362px;top:412px;width:86px;height:23px;line-height:23px;font-size:17.5px;color:#222;text-align:center;">84</div>
<div class="t" style="left:448px;top:412px;width:86px;height:23px;line-height:23px;font-size:17.5px;color:#222;text-align:center;">95</div>
<div class="t" style="left:534px;top:412px;width:86px;height:23px;line-height:23px;font-size:17.5px;color:#222;text-align:center;">52</div>
<div class="t" style="left:620px;top:412px;width:86px;height:23px;line-height:23px;font-size:17.5px;color:#222;text-align:center;">74</div>
<div class="t" style="left:706px;top:412px;width:86px;height:23px;line-height:23px;font-size:17.5px;color:#222;text-align:center;">410</div>
<div class="t" style="left:36px;top:432.5px;width:162px;height:23px;line-height:23px;font-size:17px;color:#222;font-size:16px;">麵包</div>
<div class="t" style="left:173px;top:435px;width:103px;height:23px;line-height:23px;font-size:17.5px;color:#222;text-align:center;">24</div>
<div class="t" style="left:276px;top:435px;width:86px;height:23px;line-height:23px;font-size:17.5px;color:#222;text-align:center;">51</div>
<div class="t" style="left:362px;top:435px;width:86px;height:23px;line-height:23px;font-size:17.5px;color:#222;text-align:center;">50</div>
<div class="t" style="left:448px;top:435px;width:86px;height:23px;line-height:23px;font-size:17.5px;color:#222;text-align:center;">35</div>
<div class="t" style="left:534px;top:435px;width:86px;height:23px;line-height:23px;font-size:17.5px;color:#222;text-align:center;">31</div>
<div class="t" style="left:620px;top:435px;width:86px;height:23px;line-height:23px;font-size:17.5px;color:#222;text-align:center;">55</div>
<div class="t" style="left:706px;top:435px;width:86px;height:23px;line-height:23px;font-size:17.5px;color:#222;text-align:center;">246</div>
<div class="t" style="left:370px;top:545px;width:312px;height:23px;line-height:23px;font-size:18px;color:#e26b0a;text-align:center;">20170101台中</div>
<div class="t" style="left:36px;top:566.5px;width:162px;height:23px;line-height:23px;font-size:17px;color:#222;font-size:16.6px;letter-spacing:0.6px;">產品/經銷商/數量</div>
<div class="t" style="left:174px;top:567.5px;width:103px;height:23px;line-height:23px;font-size:17px;color:#222;text-align:center;">益文勝</div>
<div class="t" style="left:277px;top:567.5px;width:86px;height:23px;line-height:23px;font-size:17px;color:#222;text-align:center;">同鑫欣</div>
<div class="t" style="left:363px;top:567.5px;width:86px;height:23px;line-height:23px;font-size:17px;color:#222;text-align:center;">德財記</div>
<div class="t" style="left:449px;top:567.5px;width:86px;height:23px;line-height:23px;font-size:17px;color:#222;text-align:center;">采德樺</div>
<div class="t" style="left:535px;top:567.5px;width:86px;height:23px;line-height:23px;font-size:17px;color:#222;text-align:center;">漢瑞強</div>
<div class="t" style="left:621px;top:567.5px;width:86px;height:23px;line-height:23px;font-size:17px;color:#222;text-align:center;">宏聰煌</div>
<div class="t" style="left:707px;top:567.5px;width:86px;height:23px;line-height:23px;font-size:17px;color:#222;text-align:center;">鑫瑞欣</div>
<div class="t" style="left:793px;top:567.5px;width:86px;height:23px;line-height:23px;font-size:17px;color:#222;text-align:center;">財瑞樺</div>
<div class="t" style="left:879px;top:567.5px;width:86px;height:23px;line-height:23px;font-size:17px;color:#222;text-align:center;">瑞信山</div>
<div class="t" style="left:962px;top:567px;width:57px;height:23px;line-height:23px;font-size:17.5px;color:#222;font-size:18.8px;text-align:center;">Total</div>
<div class="t" style="left:36px;top:589.5px;width:162px;height:23px;line-height:23px;font-size:17px;color:#222;font-size:16px;">巧克力</div>
<div class="t" style="left:173px;top:592px;width:103px;height:23px;line-height:23px;font-size:17.5px;color:#222;text-align:center;">91</div>
<div class="t" style="left:276px;top:592px;width:86px;height:23px;line-height:23px;font-size:17.5px;color:#222;text-align:center;">27</div>
<div class="t" style="left:362px;top:592px;width:86px;height:23px;line-height:23px;font-size:17.5px;color:#222;text-align:center;">39</div>
<div class="t" style="left:448px;top:592px;width:86px;height:23px;line-height:23px;font-size:17.5px;color:#222;text-align:center;">34</div>
<div class="t" style="left:534px;top:592px;width:86px;height:23px;line-height:23px;font-size:17.5px;color:#222;text-align:center;">89</div>
<div class="t" style="left:620px;top:592px;width:86px;height:23px;line-height:23px;font-size:17.5px;color:#222;text-align:center;">71</div>
<div class="t" style="left:706px;top:592px;width:86px;height:23px;line-height:23px;font-size:17.5px;color:#222;text-align:center;">94</div>
<div class="t" style="left:792px;top:592px;width:86px;height:23px;line-height:23px;font-size:17.5px;color:#222;text-align:center;">63</div>
<div class="t" style="left:878px;top:592px;width:86px;height:23px;line-height:23px;font-size:17.5px;color:#222;text-align:center;">51</div>
<div class="t" style="left:964px;top:592px;width:57px;height:23px;line-height:23px;font-size:17.5px;color:#222;text-align:center;">559</div>
<div class="t" style="left:36px;top:612.5px;width:162px;height:23px;line-height:23px;font-size:17px;color:#222;font-size:16px;">洋芋片</div>
<div class="t" style="left:173px;top:615px;width:103px;height:23px;line-height:23px;font-size:17.5px;color:#222;text-align:center;">62</div>
<div class="t" style="left:276px;top:615px;width:86px;height:23px;line-height:23px;font-size:17.5px;color:#222;text-align:center;">44</div>
<div class="t" style="left:362px;top:615px;width:86px;height:23px;line-height:23px;font-size:17.5px;color:#222;text-align:center;">40</div>
<div class="t" style="left:448px;top:615px;width:86px;height:23px;line-height:23px;font-size:17.5px;color:#222;text-align:center;">98</div>
<div class="t" style="left:534px;top:615px;width:86px;height:23px;line-height:23px;font-size:17.5px;color:#222;text-align:center;">51</div>
<div class="t" style="left:620px;top:615px;width:86px;height:23px;line-height:23px;font-size:17.5px;color:#222;text-align:center;">82</div>
<div class="t" style="left:706px;top:615px;width:86px;height:23px;line-height:23px;font-size:17.5px;color:#222;text-align:center;">84</div>
<div class="t" style="left:792px;top:615px;width:86px;height:23px;line-height:23px;font-size:17.5px;color:#222;text-align:center;">86</div>
<div class="t" style="left:878px;top:615px;width:86px;height:23px;line-height:23px;font-size:17.5px;color:#222;text-align:center;">45</div>
<div class="t" style="left:964px;top:615px;width:57px;height:23px;line-height:23px;font-size:17.5px;color:#222;text-align:center;">592</div>
<div class="t" style="left:36px;top:635.5px;width:162px;height:23px;line-height:23px;font-size:17px;color:#222;font-size:16px;">口香糖</div>
<div class="t" style="left:173px;top:638px;width:103px;height:23px;line-height:23px;font-size:17.5px;color:#222;text-align:center;">77</div>
<div class="t" style="left:276px;top:638px;width:86px;height:23px;line-height:23px;font-size:17.5px;color:#222;text-align:center;">86</div>
<div class="t" style="left:362px;top:638px;width:86px;height:23px;line-height:23px;font-size:17.5px;color:#222;text-align:center;">35</div>
<div class="t" style="left:448px;top:638px;width:86px;height:23px;line-height:23px;font-size:17.5px;color:#222;text-align:center;">58</div>
<div class="t" style="left:534px;top:638px;width:86px;height:23px;line-height:23px;font-size:17.5px;color:#222;text-align:center;">92</div>
<div class="t" style="left:620px;top:638px;width:86px;height:23px;line-height:23px;font-size:17.5px;color:#222;text-align:center;">35</div>
<div class="t" style="left:706px;top:638px;width:86px;height:23px;line-height:23px;font-size:17.5px;color:#222;text-align:center;">50</div>
<div class="t" style="left:792px;top:638px;width:86px;height:23px;line-height:23px;font-size:17.5px;color:#222;text-align:center;">31</div>
<div class="t" style="left:878px;top:638px;width:86px;height:23px;line-height:23px;font-size:17.5px;color:#222;text-align:center;">75</div>
<div class="t" style="left:964px;top:638px;width:57px;height:23px;line-height:23px;font-size:17.5px;color:#222;text-align:center;">539</div>
<div class="t" style="left:36px;top:658.5px;width:162px;height:23px;line-height:23px;font-size:17px;color:#222;font-size:16px;">牛奶糖</div>
<div class="t" style="left:173px;top:661px;width:103px;height:23px;line-height:23px;font-size:17.5px;color:#222;text-align:center;">100</div>
<div class="t" style="left:276px;top:661px;width:86px;height:23px;line-height:23px;font-size:17.5px;color:#222;text-align:center;">57</div>
<div class="t" style="left:362px;top:661px;width:86px;height:23px;line-height:23px;font-size:17.5px;color:#222;text-align:center;">93</div>
<div class="t" style="left:448px;top:661px;width:86px;height:23px;line-height:23px;font-size:17.5px;color:#222;text-align:center;">39</div>
<div class="t" style="left:534px;top:661px;width:86px;height:23px;line-height:23px;font-size:17.5px;color:#222;text-align:center;">66</div>
<div class="t" style="left:620px;top:661px;width:86px;height:23px;line-height:23px;font-size:17.5px;color:#222;text-align:center;">71</div>
<div class="t" style="left:706px;top:661px;width:86px;height:23px;line-height:23px;font-size:17.5px;color:#222;text-align:center;">75</div>
<div class="t" style="left:792px;top:661px;width:86px;height:23px;line-height:23px;font-size:17.5px;color:#222;text-align:center;">83</div>
<div class="t" style="left:878px;top:661px;width:86px;height:23px;line-height:23px;font-size:17.5px;color:#222;text-align:center;">64</div>
<div class="t" style="left:964px;top:661px;width:57px;height:23px;line-height:23px;font-size:17.5px;color:#222;text-align:center;">648</div>
<div class="t" style="left:36px;top:681.5px;width:162px;height:23px;line-height:23px;font-size:17px;color:#222;font-size:16px;">可樂</div>
<div class="t" style="left:173px;top:684px;width:103px;height:23px;line-height:23px;font-size:17.5px;color:#222;text-align:center;">93</div>
<div class="t" style="left:276px;top:684px;width:86px;height:23px;line-height:23px;font-size:17.5px;color:#222;text-align:center;">96</div>
<div class="t" style="left:362px;top:684px;width:86px;height:23px;line-height:23px;font-size:17.5px;color:#222;text-align:center;">75</div>
<div class="t" style="left:448px;top:684px;width:86px;height:23px;line-height:23px;font-size:17.5px;color:#222;text-align:center;">85</div>
<div class="t" style="left:534px;top:684px;width:86px;height:23px;line-height:23px;font-size:17.5px;color:#222;text-align:center;">97</div>
<div class="t" style="left:620px;top:684px;width:86px;height:23px;line-height:23px;font-size:17.5px;color:#222;text-align:center;">23</div>
<div class="t" style="left:706px;top:684px;width:86px;height:23px;line-height:23px;font-size:17.5px;color:#222;text-align:center;">32</div>
<div class="t" style="left:792px;top:684px;width:86px;height:23px;line-height:23px;font-size:17.5px;color:#222;text-align:center;">80</div>
<div class="t" style="left:878px;top:684px;width:86px;height:23px;line-height:23px;font-size:17.5px;color:#222;text-align:center;">47</div>
<div class="t" style="left:964px;top:684px;width:57px;height:23px;line-height:23px;font-size:17.5px;color:#222;text-align:center;">628</div>
<div style="position:absolute;left:31px;top:226px;width:763px;height:26px;border:2px solid #217346;"></div>
<div style="position:absolute;left:789px;top:247px;width:7px;height:7px;background:#217346;border:1px solid #fff;"></div>
<div style="position:absolute;left:1013px;top:206px;width:21px;height:501px;background:#e6e6e6;"></div>
<div style="position:absolute;left:1016px;top:208px;width:15px;height:15px;background:#fff;border:1px solid #c6c6c6;"></div>
<svg style="left:1019px;top:213px" width="9" height="5" viewBox="0 0 9 5"><path d="M0 5L4.5 0L9 5Z" fill="#777"/></svg>
<div style="position:absolute;left:1016px;top:239px;width:15px;height:455px;background:#dadada;"></div>
<div style="position:absolute;left:1016px;top:222px;width:15px;height:18px;background:#fff;border:1px solid #b9b9b9;"></div>
<div style="position:absolute;left:1016px;top:693px;width:15px;height:15px;background:#fff;border:1px solid #c6c6c6;"></div>
<svg style="left:1019px;top:698px" width="9" height="5" viewBox="0 0 9 5"><path d="M0 0L4.5 5L9 0Z" fill="#777"/></svg>
<div style="position:absolute;left:0px;top:707px;width:1034px;height:28px;background:#e6e6e6;"></div>
<svg style="left:24px;top:716px" width="40" height="9" viewBox="0 0 40 9"><path d="M4 0V9L0 4.5Z" fill="#c4c4c4"/><path d="M30 0V9L34 4.5Z" fill="#c4c4c4"/></svg>
<div style="position:absolute;left:98px;top:707px;width:76px;height:25px;background:linear-gradient(#ffffff 0%,#fdf3f1 25%,#f5b8ab 70%,#f2a595 100%);border-bottom:2px solid #217346;border-left:1px solid #c6c6c6;border-right:1px solid #c6c6c6;"></div>
<div class="t" style="left:98px;top:711px;width:76px;height:18px;line-height:18px;font-size:12.6px;color:#4a4a4a;text-align:center;">原始資料</div>
<svg style="left:206px;top:712px" width="18" height="18" viewBox="0 0 18 18"><circle cx="9" cy="9" r="8" fill="none" stroke="#777" stroke-width="1.2"/><path d="M9 4.5V13.5M4.5 9H13.5" stroke="#777" stroke-width="1.6"/></svg>
<div style="position:absolute;left:619px;top:715px;width:2px;height:2px;background:#aaa;"></div>
<div style="position:absolute;left:619px;top:720px;width:2px;height:2px;background:#aaa;"></div>
<div style="position:absolute;left:619px;top:725px;width:2px;height:2px;background:#aaa;"></div>
<div style="position:absolute;left:637px;top:714px;width:14px;height:15px;background:#fff;border:1px solid #c6c6c6;"></div>
<svg style="left:641px;top:717px" width="5" height="9" viewBox="0 0 5 9"><path d="M5 0V9L0 4.5Z" fill="#666"/></svg>
<div style="position:absolute;left:650px;top:714px;width:316px;height:15px;background:#fff;border:1px solid #c6c6c6;"></div>
<div style="position:absolute;left:966px;top:714px;width:32px;height:15px;background:#dadada;"></div>
<div style="position:absolute;left:998px;top:714px;width:15px;height:15px;background:#fff;border:1px solid #c6c6c6;"></div>
<svg style="left:1004px;top:717px" width="5" height="9" viewBox="0 0 5 9"><path d="M0 0V9L5 4.5Z" fill="#666"/></svg>
<div style="position:absolute;left:0px;top:735px;width:1034px;height:22px;background:#f3f3f3;border-top:1px solid #d6d6d6;"></div>
<div class="t" style="left:5px;top:737px;width:40px;height:18px;line-height:18px;font-size:12px;color:#444;">就緒</div>
<svg style="left:48px;top:737px" width="16" height="16" viewBox="0 0 16 16"><rect x="2.5" y="3.5" width="11" height="11" fill="#fff" stroke="#777"/><rect x="8" y="3" width="6" height="3" fill="#777"/><g fill="#666"><rect x="4.5" y="8" width="2" height="1"/><rect x="7.5" y="8" width="2" height="1"/><rect x="10.5" y="8" width="2" height="1"/><rect x="4.5" y="10.5" width="2" height="1"/><rect x="7.5" y="10.5" width="2" height="1"/><rect x="10.5" y="10.5" width="2" height="1"/></g><circle cx="4" cy="4.3" r="3.4" fill="#808080"/></svg>
<div style="position:absolute;left:726px;top:736px;width:38px;height:21px;background:#d6d6d6;"></div>
<svg style="left:737px;top:739px" width="15" height="14" viewBox="0 0 15 14"><g fill="none" stroke="#666"><rect x="0.5" y="0.5" width="14" height="13"/><path d="M0.5 4.5h14M0.5 9h14M5 0.5v13M10 0.5v13"/></g></svg>
<svg style="left:776px;top:739px" width="15" height="14" viewBox="0 0 15 14"><g fill="none" stroke="#666"><rect x="0.5" y="0.5" width="14" height="13"/><rect x="3.5" y="3" width="8" height="8"/><path d="M5 5.5h5M5 7.5h5M5 9.5h5"/></g></svg>
<svg style="left:814px;top:739px" width="15" height="14" viewBox="0 0 15 14"><g fill="none" stroke="#666"><rect x="0.5" y="0.5" width="14" height="13"/><path d="M7.5 0.5v8.5h7"/></g></svg>
<div style="position:absolute;left:845px;top:745px;width:7px;height:2px;background:#555;"></div>
<div style="position:absolute;left:856px;top:745px;width:100px;height:1px;background:#999;"></div>
<div style="position:absolute;left:908px;top:740px;width:4px;height:11px;background:#666;"></div>
<div style="position:absolute;left:958px;top:745px;width:10px;height:2px;background:#555;"></div>
<div style="position:absolute;left:962px;top:741px;width:2px;height:10px;background:#555;"></div>
<div class="t" style="left:982px;top:737px;width:40px;height:18px;line-height:18px;font-size:12.5px;color:#444;">130%</div>
<div style="position:absolute;left:1034px;top:1px;width:1px;height:757px;background:#217346;"></div>
<div style="position:absolute;left:0px;top:757px;width:1035px;height:1px;background:#217346;"></div>
</body></html>
